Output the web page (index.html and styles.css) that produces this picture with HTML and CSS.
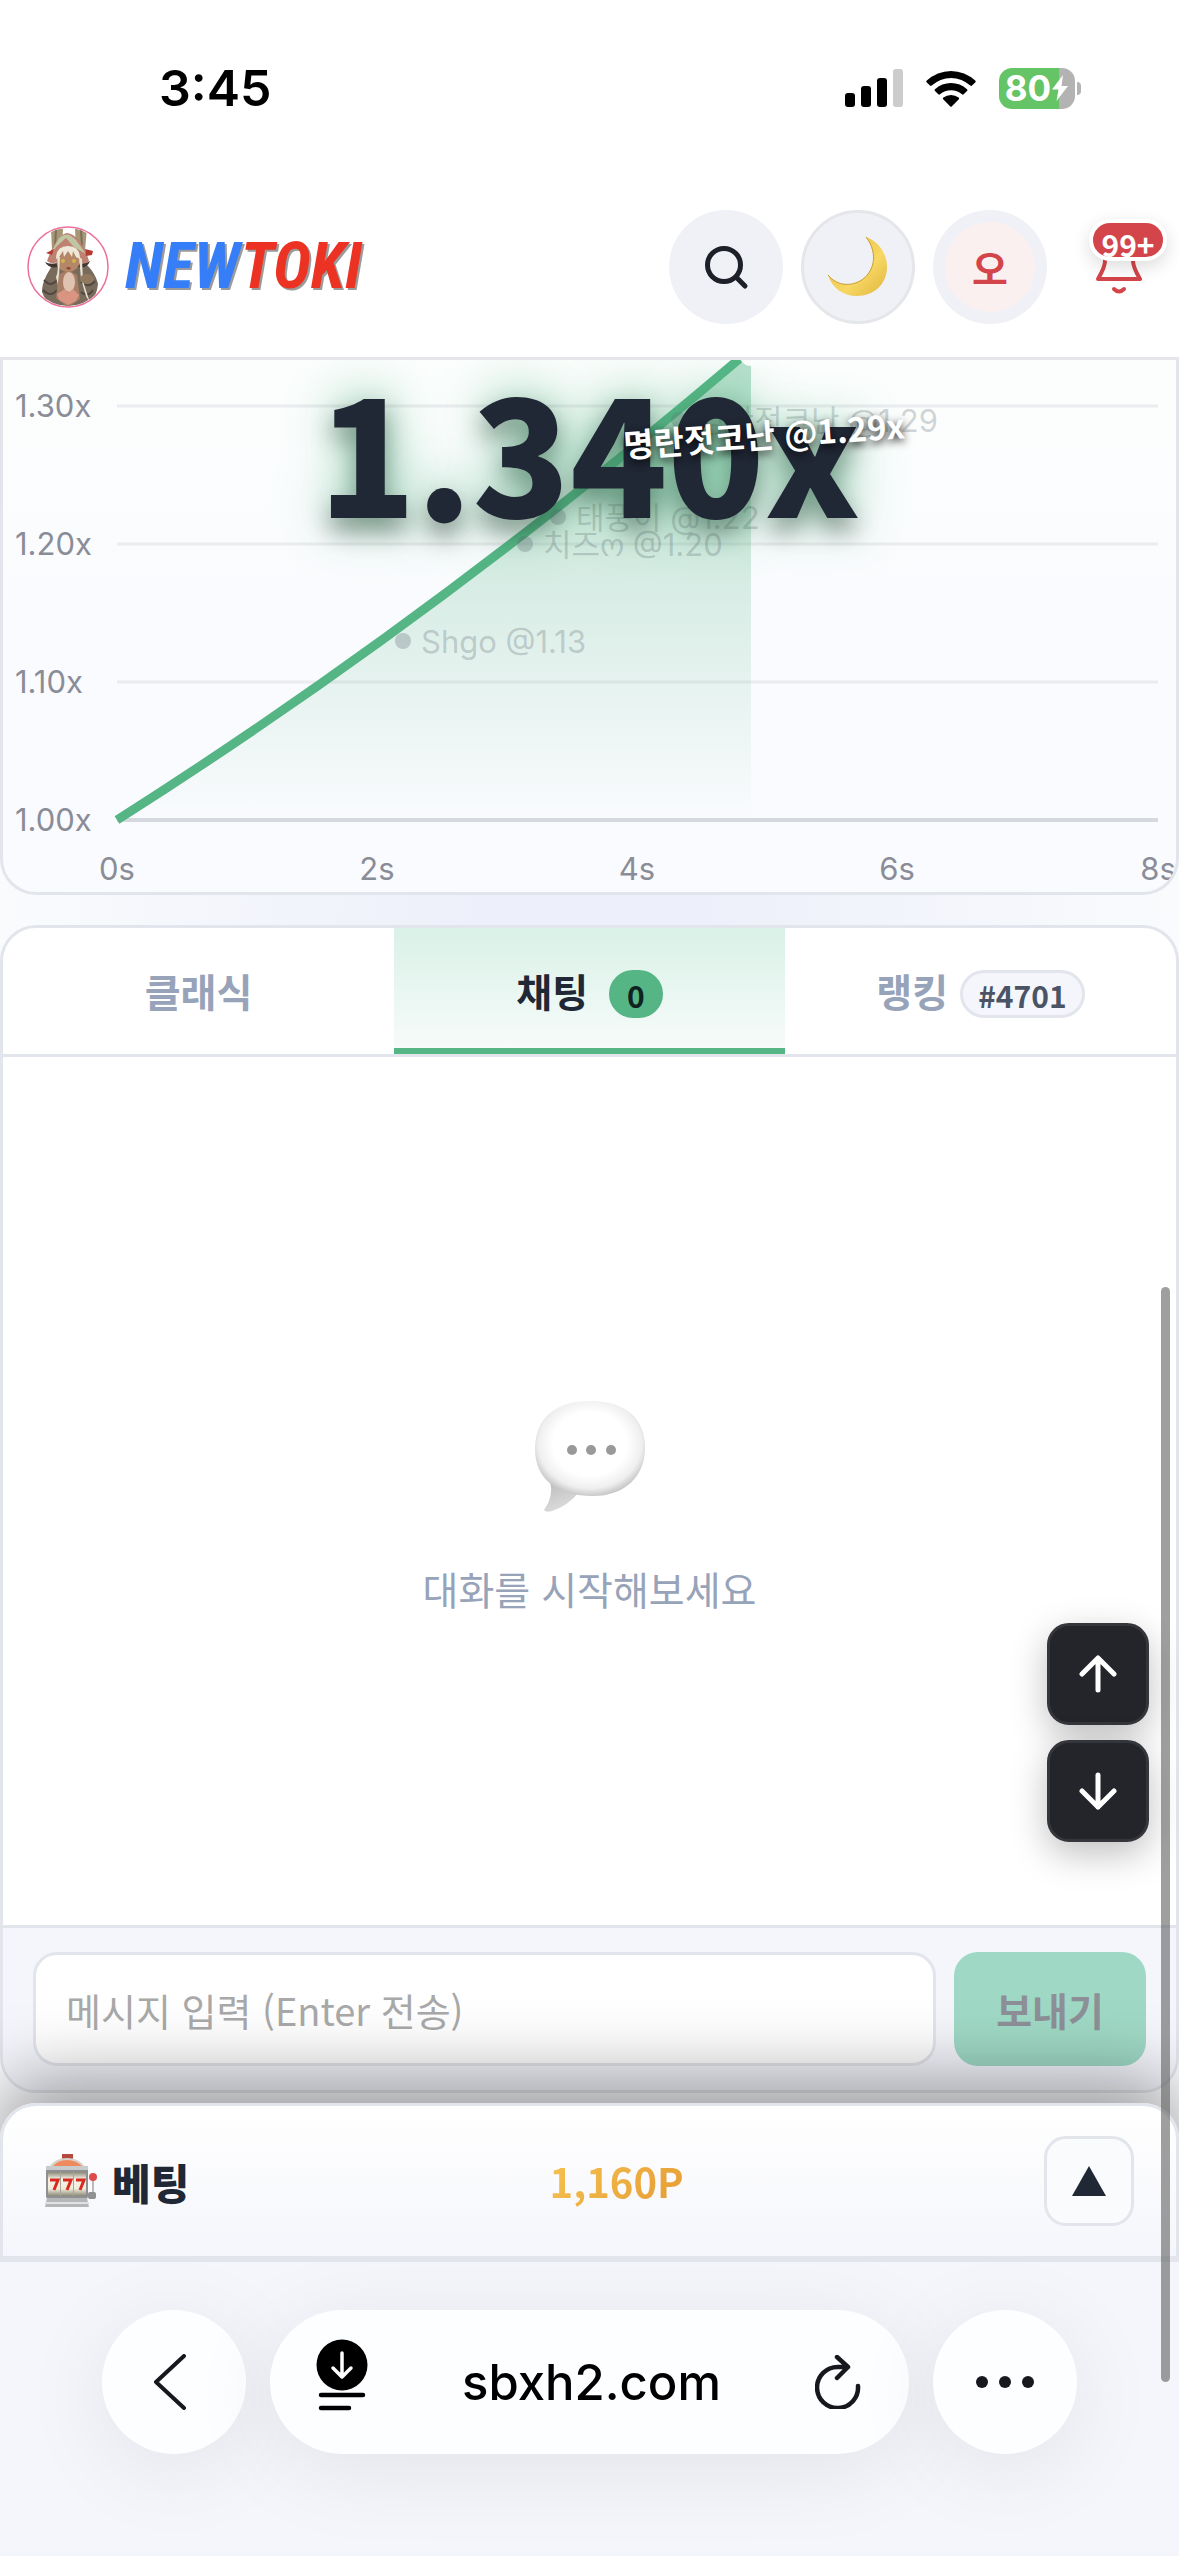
FILE: index.html
```html
<!DOCTYPE html>
<html lang="ko">
<head>
<meta charset="utf-8">
<meta name="viewport" content="width=device-width, initial-scale=1">
<title>NEWTOKI</title>
<link rel="stylesheet" href="styles.css">
</head>
<body>
<div class="status-bar">
  <time class="clock">3:45</time>
  <div class="status-icons">
    <svg width="58" height="38" viewBox="0 0 58 38" aria-hidden="true">
      <rect x="0" y="24" width="10" height="14" rx="3"/>
      <rect x="16" y="17" width="10" height="21" rx="3"/>
      <rect x="32" y="9" width="10" height="29" rx="3"/>
      <rect x="48" y="0" width="10" height="38" rx="3" fill="#ccc"/>
    </svg>
    <svg width="50" height="37" viewBox="0 0 50 37" aria-hidden="true">
      <path d="M0.8 10.6a35 35 0 0 1 48.4 0 1.2 1.2 0 0 1 0 1.8l-3.2 3.2a1.2 1.2 0 0 1-1.7 0 28 28 0 0 0-38.6 0 1.2 1.2 0 0 1-1.7 0L0.8 12.4a1.2 1.2 0 0 1 0-1.8z"/>
      <path d="M9 19.2a23.5 23.5 0 0 1 32 0 1.2 1.2 0 0 1 0 1.8l-3.3 3.3a1.2 1.2 0 0 1-1.7 0 16.6 16.6 0 0 0-22 0 1.2 1.2 0 0 1-1.7 0L9 21a1.2 1.2 0 0 1 0-1.8z"/>
      <path d="M17.4 27.6a12 12 0 0 1 15.2 0 1.2 1.2 0 0 1 0 1.8l-6.7 6.8a1.2 1.2 0 0 1-1.8 0l-6.7-6.8a1.2 1.2 0 0 1 0-1.8z"/>
    </svg>
    <div class="battery">
      <span>80</span>
      <svg width="18" height="26" viewBox="0 0 18 26" aria-hidden="true"><path d="M12 0L1 14.5h6.5L5.5 26 17 11h-6.5z" fill="#fff"/></svg>
    </div>
  </div>
</div>

<header class="header">
  <a class="brand" href="#">
    <svg class="avatar" viewBox="0 0 82 82" aria-hidden="true">
      <defs><clipPath id="face"><circle cx="41" cy="41" r="39"/></clipPath></defs>
      <circle cx="41" cy="41" r="40" fill="#fff" stroke="#ee6f9b" stroke-width="1.5"/>
      <g clip-path="url(#face)">
        <path d="M24 2l12 1-1 18-10 4z" fill="#a59678"/><path d="M48 3l12-2-2 24-9-4z" fill="#a59678"/>
        <path d="M29 3l-1 20M54 3l1 19" stroke="#7d6f55" stroke-width="2"/>
        <path d="M26 38c-6 10-11 18-11 28 3 8 8 14 14 16h28c8-4 13-14 14-24-2-8-6-14-12-20z" fill="#786b5c"/>
        <path d="M17 54q7 8 13 0M16 64q8 8 14 0M54 56q7 7 14-1M54 66q7 6 12-2" fill="none" stroke="#514840" stroke-width="2"/>
        <path d="M40 7c-8 1-15 14-20 28 7 5 12 1 12-5h18c1 7 7 11 12 5-4-14-12-27-22-28z" fill="#bf8272"/>
        <path d="M32 12q8-8 17 2l10 14-12-7-8-9-9 8-8 10z" fill="#bec6a3"/>
        <path d="M19 27l8-4-2 6zM58 23l8 2-1 4-6 1z" fill="#b43a32"/>
        <path d="M18 36q5 3 12 1v4q-8 2-12-5zM63 35q-5 4-12 2v4q9 2 12-6z" fill="#40362f"/>
        <ellipse cx="41" cy="34" rx="12" ry="12" fill="#b58667"/>
        <path d="M29 33q0-13 12-13t12 13l-4-2-3-6-1 6-4-6-4 6-1-6-4 6z" fill="#eee8d8"/>
        <path d="M30 31q2 14-1 20l4 17-1-17 1-20zM52 31l2 22 5 17 4 7-7-22-1-22z" fill="#e8e1d2"/>
        <circle cx="36" cy="35" r="2" fill="#cdb84c"/><circle cx="47" cy="35" r="2" fill="#cdb84c"/>
        <path d="M39 42q2-2 5 0l-2 2z" fill="#8c4239"/>
        <path d="M32 48q10-5 18 1l3 24-12 8-12-9z" fill="#a87f66"/>
        <ellipse cx="42" cy="56" rx="6" ry="10" fill="#dfc3b0"/><ellipse cx="60" cy="53" rx="7" ry="5" fill="#90795e"/>
        <path d="M30 68l8-5 3 4 5-4 6 6-3 6-8 4-9-5z" fill="#d99482"/>
      </g>
    </svg>
    <span class="wordmark"><span class="word-new">NEW</span><span class="word-toki">TOKI</span></span>
  </a>
  <nav class="actions">
    <button class="round" aria-label="검색">
      <svg width="46" height="46" viewBox="0 0 46 46" fill="none" stroke="#1d2029" stroke-width="5" stroke-linecap="round" aria-hidden="true"><circle cx="21" cy="21" r="16.500"/><path d="M33.500 33.500l8.500 8.500"/></svg>
    </button>
    <button class="round outlined" aria-label="다크 모드">
      <svg width="60" height="60" viewBox="0 0 60 60" aria-hidden="true">
        <defs><linearGradient id="moon" x1="0" y1="0" x2="1" y2="1"><stop offset="0" stop-color="#e3b83f"/><stop offset=".6" stop-color="#f7d862"/><stop offset="1" stop-color="#dfb440"/></linearGradient></defs>
        <path d="M38 0C50 4 59 16 59 30c0 17-13 29-30 29C15 59 4 51 0 38c8 10 21 12 32 6C46 36 51 17 38 0z" fill="url(#moon)"/>
        <path d="M0 38c8 10 21 12 32 6C46 36 51 17 38 0" fill="none" stroke="#c99b38" stroke-width="1"/>
      </svg>
    </button>
    <button class="round" aria-label="프로필"><span class="profile">오</span></button>
    <button class="bell" aria-label="알림">
      <svg width="46" height="64" viewBox="0 0 46 64" fill="none" stroke="#d3454a" stroke-width="4" stroke-linecap="round" stroke-linejoin="round" aria-hidden="true"><path d="M9 31V20a14 14 0 0 1 28 0v11c0 6 3 11 7 18H2c4-7 7-12 7-18z"/><path d="M18 59q5 5 10 0"/></svg>
      <span class="count">99+</span>
    </button>
  </nav>
</header>

<main class="page">
  <section class="chart">
    <svg class="plot" viewBox="0 0 1173 532" role="img" aria-label="배수 그래프">
      <defs><linearGradient id="area" x1="0" y1="0" x2="0" y2="1"><stop offset="0" stop-color="#55b585" stop-opacity=".42"/><stop offset="1" stop-color="#55b585" stop-opacity="0"/></linearGradient></defs>
      <g stroke="#ebecef" stroke-width="3"><path d="M114 46H1155M114 184H1155M114 322H1155"/><path d="M114 460H1155" stroke="#d6d8df" stroke-width="4"/></g>
      <path d="M114 460Q435 256 748 -10V460z" fill="url(#area)"/>
      <path d="M114 460Q435 256 742 -6" fill="none" stroke="#55b585" stroke-width="9"/>
      <circle cx="748" cy="-6" r="12" fill="#fff"/>
      <g class="axis">
        <text x="12" y="57">1.30x</text><text x="12" y="195">1.20x</text><text x="12" y="333">1.10x</text><text x="12" y="471">1.00x</text>
        <g text-anchor="middle"><text x="114" y="520">0s</text><text x="374" y="520">2s</text><text x="634" y="520">4s</text><text x="894" y="520">6s</text><text x="1155" y="520">8s</text></g>
      </g>
      <g class="cashout">
        <circle cx="400" cy="281" r="8"/><text x="418" y="293">Shgo @1.13</text>
        <circle cx="522" cy="184" r="8"/><text x="540" y="196">치즈ო @1.20</text>
        <circle cx="555" cy="157" r="8"/><text x="573" y="169">태풍이 @1.22</text>
        <circle cx="676" cy="60" r="8"/><text x="694" y="72">명란젓코난 @1.29</text>
      </g>
    </svg>
    <strong class="multiplier">1.340x</strong>
    <span class="toast">명란젓코난 @1.29x</span>
  </section>

  <section class="chat">
    <div class="tabs" role="tablist">
      <button class="tab" role="tab">클래식</button>
      <button class="tab active" role="tab" aria-selected="true">채팅 <span class="chip green">0</span></button>
      <button class="tab rank" role="tab">랭킹 <span class="chip">#4701</span></button>
    </div>
    <div class="empty">
      <svg width="110" height="112" viewBox="0 0 110 112" aria-hidden="true">
        <defs>
          <radialGradient id="bubble" cx=".5" cy=".45" r=".56"><stop offset=".6" stop-color="#fff"/><stop offset=".84" stop-color="#efefef"/><stop offset="1" stop-color="#c4c4c4"/></radialGradient>
          <linearGradient id="tail" x1="0" y1="0" x2=".4" y2="1"><stop offset="0" stop-color="#bbb"/><stop offset="1" stop-color="#dcdcdc"/></linearGradient>
        </defs>
        <path d="M15 80q4 16-6 29 2 3 8 1 16-5 27-19z" fill="url(#tail)"/>
        <path d="M55 0c36 0 55 18 55 47S89 95 58 95C22 95 0 78 0 48S20 0 55 0z" fill="url(#bubble)"/>
        <g fill="#999"><circle cx="37" cy="49" r="5"/><circle cx="56" cy="49" r="5"/><circle cx="76" cy="49" r="5"/></g>
      </svg>
      <p>대화를 시작해보세요</p>
    </div>
    <form class="composer">
      <input class="message" type="text" placeholder="메시지 입력 (Enter 전송)" aria-label="메시지 입력">
      <button class="send" type="button" disabled>보내기</button>
    </form>
  </section>

  <section class="bet">
    <h2 class="bet-title">
      <svg width="52" height="54" viewBox="0 0 52 54" aria-hidden="true">
        <defs><linearGradient id="drum" x1="0" y1="0" x2="0" y2="1"><stop offset="0" stop-color="#8c8878"/><stop offset=".3" stop-color="#f7f4e6"/><stop offset=".7" stop-color="#efecdc"/><stop offset="1" stop-color="#8c8878"/></linearGradient></defs>
        <rect x="17" y="0" width="11" height="6" fill="#b5483f"/>
        <path d="M4 13Q10 4 22 4t18 9z" fill="#d9d2cc"/><path d="M8 12q5-6 14-6t15 6z" fill="#ee8a5c"/>
        <rect x="1" y="12" width="42" height="33" rx="3" fill="#8e9092"/><rect x="1" y="12" width="42" height="4" fill="#c9cccd"/>
        <rect x="3" y="18" width="38" height="24" rx="2" fill="url(#drum)"/>
        <path d="M15.500 18v24M28.500 18v24" stroke="#aaa694"/>
        <path d="M5 26h8l-4 10M18 26h8l-4 10M31 26h8l-4 10" fill="none" stroke="#d82a20" stroke-width="3"/>
        <path d="M2 44h40l2 9H0z" fill="#b4b6b8"/><path d="M0 49h44" stroke="#dfe1e2" stroke-width="2"/>
        <path d="M48 24v18" stroke="#b9bbbd" stroke-width="2"/><rect x="43" y="38" width="8" height="7" rx="2" fill="#8f9193"/><circle cx="48" cy="23" r="4" fill="#de4b4b"/>
      </svg>
      베팅
    </h2>
    <strong class="points">1,160P</strong>
    <button class="toggle" aria-label="베팅 패널 열기"><svg width="34" height="30" viewBox="0 0 34 30" aria-hidden="true"><path d="M17 0l17 30H0z" fill="#202735"/></svg></button>
  </section>
</main>

<footer class="browser">
  <button class="glass back" aria-label="뒤로"><svg width="34" height="56" viewBox="0 0 34 56" fill="none" stroke="#16181d" stroke-width="4" stroke-linecap="round" stroke-linejoin="round" aria-hidden="true"><path d="M31 2L3 28l28 26"/></svg></button>
  <div class="glass address">
    <button class="plain download" aria-label="다운로드">
      <svg width="52" height="72" viewBox="0 0 52 72" aria-hidden="true"><circle cx="26" cy="26" r="25.500"/><path d="M26 14v23M17 29l9 9 9-9" fill="none" stroke="#fff" stroke-width="3.500" stroke-linecap="round" stroke-linejoin="round"/><path d="M5 56h42M5 69h28" stroke="#000" stroke-width="4.500" stroke-linecap="round"/></svg>
    </button>
    <span class="domain">sbxh2.com</span>
    <button class="plain" aria-label="새로고침">
      <svg width="46" height="54" viewBox="0 0 46 54" fill="none" stroke="#16181d" stroke-width="4.500" stroke-linecap="round" stroke-linejoin="round" aria-hidden="true"><path d="M43 31A20.500 20.500 0 1 1 23 12h10M22 2l11 10-11 11"/></svg>
    </button>
  </div>
  <button class="glass" aria-label="더 보기"><svg width="60" height="14" viewBox="0 0 60 14" fill="#16181d" aria-hidden="true"><circle cx="7" cy="7" r="6"/><circle cx="30" cy="7" r="6"/><circle cx="53" cy="7" r="6"/></svg></button>
</footer>

<div class="jump">
  <button aria-label="맨 위로"><svg width="38" height="38" viewBox="0 0 38 38" aria-hidden="true"><path d="M19 35V3M3 19L19 3l16 16"/></svg></button>
  <button aria-label="맨 아래로"><svg width="38" height="38" viewBox="0 0 38 38" aria-hidden="true"><path d="M19 3v32M3 19l16 16 16-16"/></svg></button>
</div>
<div class="scroll-thumb"></div>
</body>
</html>
```
FILE: styles.css
```css
* { box-sizing: border-box; }
body {
  position: relative;
  margin: 0;
  min-height: 100vh;
  display: flex;
  flex-direction: column;
  background: #f5f6fb;
  color: #202735;
  font-family: "Noto Sans CJK KR", "Noto Sans", sans-serif;
  font-size: 39px;
}
button { margin: 0; padding: 0; border: 0; background: none; color: inherit; font: inherit; }
svg { display: block; flex: none; }

/* Status bar */
.status-bar {
  display: flex;
  align-items: center;
  justify-content: space-between;
  height: 176px;
  padding: 0 104px 0 159px;
  background: #fff;
  color: #000;
  font-family: Inter, sans-serif;
}
.clock { font-size: 50px; font-weight: 600; }
.status-icons { display: flex; align-items: center; gap: 23px; }
.battery {
  position: relative;
  display: flex;
  align-items: center;
  justify-content: center;
  width: 76px;
  height: 41px;
  border-radius: 13px;
  background: linear-gradient(90deg, #65c466 60px, #b3b3b3 60px);
  color: #fff;
  font-size: 35px;
  font-weight: 700;
}
.battery::after {
  content: "";
  position: absolute;
  right: -6px;
  width: 4px;
  height: 13px;
  border-radius: 0 4px 4px 0;
  background: #b3b3b3;
}

/* Header */
.header {
  display: flex;
  align-items: center;
  justify-content: space-between;
  height: 184px;
  padding: 0 12px 0 27px;
  background: #fff;
  border-bottom: 3px solid #e5e6ea;
}
.brand { display: flex; align-items: center; gap: 16px; text-decoration: none; }
.avatar { width: 82px; height: 82px; }
.wordmark {
  font: italic 700 64px "Liberation Sans Narrow", "Roboto Condensed", "Open Sans Condensed", "Liberation Sans", sans-serif;
  text-shadow: 2px 2px 0 #9b9b9b;
}
.word-new { color: #357ef8; }
.word-toki { color: #ec3323; }
.actions { display: flex; align-items: center; gap: 18px; }
.round {
  display: flex;
  align-items: center;
  justify-content: center;
  width: 114px;
  height: 114px;
  border-radius: 50%;
  background: #f0f1f6;
}
.outlined { border: 3px solid #e5e6ea; }
.profile {
  width: 90px;
  border-radius: 50%;
  background: #fbf0f0;
  color: #d3454a;
  font-weight: 700;
  line-height: 90px;
}
.bell {
  position: relative;
  display: flex;
  align-items: flex-start;
  width: 102px;
  height: 114px;
  padding: 20px 0 0 31px;
}
.count {
  position: absolute;
  top: 9px;
  right: 0;
  width: 78px;
  height: 42px;
  border: 4px solid #fff;
  border-radius: 21px;
  background: #d3454a;
  box-shadow: 0 6px 18px rgba(0, 0, 0, .14);
  color: #fff;
  font-size: 30px;
  font-weight: 700;
  line-height: 42px;
}

/* Multiplier chart */
.page { background: radial-gradient(ellipse 50% 60% at 50% 30%, #edf0fa 20%, #fafbfd 100%); }
.chart {
  position: relative;
  border: 3px solid #e3e5ec;
  border-top: 0;
  border-radius: 0 0 36px 36px;
  background: linear-gradient(#fcfefd, #fafbfe 45%);
  overflow: hidden;
}
.plot { width: 100%; height: auto; }
.axis { fill: #8a8d98; font: 31px Inter, sans-serif; }
.cashout { fill: rgba(100, 110, 115, .3); font: 31px Inter, "Noto Sans CJK KR", sans-serif; }
.multiplier {
  position: absolute;
  top: 0;
  left: 0;
  right: 0;
  text-align: center;
  font-size: 160px;
  font-weight: 900;
  line-height: 176px;
  text-shadow: 0 0 54px rgba(85, 181, 133, .8), 0 12px 24px rgba(0, 0, 0, .45);
}
.toast {
  position: absolute;
  top: 50px;
  left: 620px;
  color: #fff;
  font-size: 33px;
  font-weight: 700;
  line-height: 48px;
  text-shadow: 0 3px 9px rgba(0, 0, 0, .9);
  transform: rotate(-4deg);
}

/* Chat */
.chat {
  margin: 30px 0 10px;
  border: 3px solid #e3e5ec;
  border-radius: 36px;
  background: #fff;
  overflow: hidden;
}
.tabs { display: grid; grid-template-columns: repeat(3, 1fr); border-bottom: 3px solid #e3e5ec; }
.tab {
  display: flex;
  align-items: center;
  justify-content: center;
  gap: 21px;
  height: 126px;
  border-bottom: 6px solid transparent;
  padding-top: 4px;
  color: #97a3b8;
  font-weight: 700;
}
.tab.active { border-color: #55b585; background: linear-gradient(#d9f1e7, #f7fbfa); color: #202735; }
.rank { gap: 12px; }
.chip {
  height: 48px;
  margin-top: 8px;
  padding: 0 15px;
  border: 3px solid #e3e5ec;
  border-radius: 24px;
  background: #f4f6fc;
  color: #4a5464;
  font-size: 30px;
  line-height: 44px;
}
.chip.green { border-color: #55b585; background: #55b585; color: #10221f; }
.empty {
  display: flex;
  flex-direction: column;
  align-items: center;
  justify-content: center;
  gap: 45px;
  height: 868px;
  padding-top: 36px;
  color: #97a3b8;
}
.empty p { margin: 0; line-height: 60px; }
.composer {
  display: flex;
  gap: 18px;
  padding: 24px 30px;
  border-top: 3px solid #e3e5ec;
  background: #f4f6fc;
}
.message {
  flex: 1;
  min-width: 0;
  height: 114px;
  padding: 0 30px;
  border: 3px solid #e3e5ec;
  border-radius: 24px;
  background: #fff;
  font: inherit;
  font-size: 38px;
}
.message::placeholder { color: #a9a9a9; }
.send {
  width: 192px;
  border-radius: 24px;
  background: #9fd9c5;
  color: #8d9097;
  font-weight: 700;
}

/* Betting sheet */
.bet {
  position: relative;
  display: flex;
  align-items: center;
  justify-content: space-between;
  height: 159px;
  padding: 0 42px;
  border: 3px solid #e3e5ec;
  border-bottom-width: 6px;
  border-radius: 36px 36px 0 0;
  background: linear-gradient(#fff, #f5f6fb);
  box-shadow: 0 -24px 72px rgba(0, 0, 0, .38);
  clip-path: inset(-180px 0 0 0);
}
.bet-title { display: flex; align-items: center; gap: 15px; margin: 0; font-size: 42px; font-weight: 900; }
.points {
  background: linear-gradient(135deg, #f6c453, #e59a32);
  background-clip: text;
  color: transparent;
  font-size: 40px;
}
.toggle {
  display: flex;
  align-items: center;
  justify-content: center;
  width: 90px;
  height: 90px;
  border: 3px solid #e3e5ec;
  border-radius: 22px;
  background: #fafbfd;
}

/* Browser toolbar */
.browser { display: flex; gap: 24px; flex: 1; align-items: flex-start; padding: 48px 102px 102px; }
.glass {
  display: flex;
  flex: none;
  align-items: center;
  justify-content: center;
  width: 144px;
  height: 144px;
  border-radius: 72px;
  background: #fdfeff;
  box-shadow: 0 15px 90px rgba(0, 0, 0, .08);
}
.back { padding-right: 9px; }
.address { flex: 1; justify-content: space-between; padding: 0 48px 0 46px; }
.domain { color: #000; font: 500 49px Inter, sans-serif; }
.plain { display: flex; }
.download { padding-bottom: 14px; }

/* Floating controls */
.jump { position: absolute; top: 1623px; right: 30px; display: grid; gap: 15px; }
.jump button {
  display: flex;
  align-items: center;
  justify-content: center;
  width: 102px;
  height: 102px;
  border: 3px solid #34363c;
  border-radius: 22px;
  background: #24252b;
  box-shadow: 0 12px 36px rgba(0, 0, 0, .25);
}
.jump svg { fill: none; stroke: #fff; stroke-width: 5px; stroke-linecap: round; stroke-linejoin: round; }
.scroll-thumb {
  position: absolute;
  top: 1287px;
  right: 9px;
  width: 9px;
  height: 1095px;
  border-radius: 5px;
  background: rgba(90, 90, 90, .58);
}
```
